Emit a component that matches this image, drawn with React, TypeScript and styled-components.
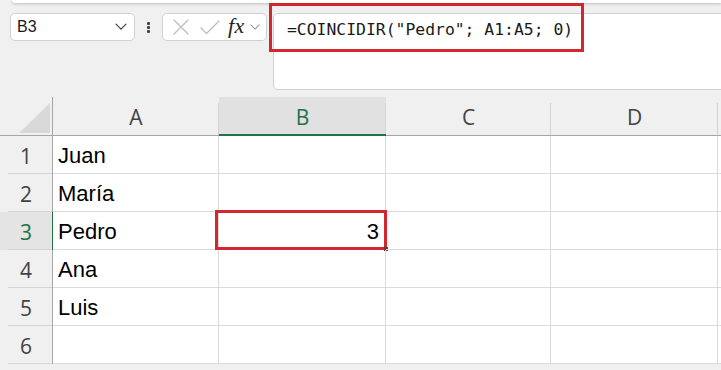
import React from 'react';
import styled, { createGlobalStyle, css } from 'styled-components';

const GlobalStyle = createGlobalStyle`
  html, body {
    margin: 0;
    padding: 0;
    background: #f0f0f0;
    overflow: hidden;
  }
`;

const GREEN = '#217346';
const RED = '#d4262f';
const GRID_LINE = '#dadada';

const COLUMNS = [
  { name: 'A', width: 166 },
  { name: 'B', width: 167 },
  { name: 'C', width: 165 },
  { name: 'D', width: 167 },
];

const ROWS: { a?: string; b?: string }[] = [
  { a: 'Juan' },
  { a: 'María' },
  { a: 'Pedro', b: '3' },
  { a: 'Ana' },
  { a: 'Luis' },
  {},
];

const SELECTED_COL = 'B';
const SELECTED_ROW = 3;

const Chevron: React.FC<{ size?: number; color?: string }> = ({ size = 12, color = '#424242' }) => (
  <svg width={size} height={size * 0.6} viewBox="0 0 12 7" fill="none">
    <path d="M1 1l5 5 5-5" stroke={color} strokeWidth="1.3" strokeLinecap="round" strokeLinejoin="round" />
  </svg>
);

const CancelIcon = () => (
  <svg width="16" height="16" viewBox="0 0 16 16" fill="none">
    <path d="M1 1l14 14M15 1L1 15" stroke="#bdbdbd" strokeWidth="1.3" strokeLinecap="round" />
  </svg>
);

const CheckIcon = () => (
  <svg width="20" height="15" viewBox="0 0 20 15" fill="none">
    <path d="M1 8l5.5 5.5L19 1" stroke="#bdbdbd" strokeWidth="1.3" strokeLinecap="round" strokeLinejoin="round" />
  </svg>
);

export default function App() {
  return (
    <>
      <GlobalStyle />
      <Page>
        <RibbonEdge />
        <FormulaRow>
          <NameBox>
            <NameText>B3</NameText>
            <Chevron size={12} />
          </NameBox>
          <Dots>
            <Dot />
            <Dot />
            <Dot />
          </Dots>
          <ButtonGroup>
            <IconSlot>
              <CancelIcon />
            </IconSlot>
            <IconSlot>
              <CheckIcon />
            </IconSlot>
            <Fx>fx</Fx>
            <Chevron size={10} color="#9e9e9e" />
          </ButtonGroup>
          <FormulaBox>
            <FormulaText>=COINCIDIR("Pedro"; A1:A5; 0)</FormulaText>
          </FormulaBox>
        </FormulaRow>
        <FormulaHighlight />

        <Sheet>
          <Corner />
          {COLUMNS.map((c) => (
            <ColHeader key={c.name} $selected={c.name === SELECTED_COL}>
              {c.name}
            </ColHeader>
          ))}
          <ColHeader $selected={false} />

          {ROWS.map((r, i) => {
            const n = i + 1;
            return (
              <React.Fragment key={n}>
                <RowHeader $selected={n === SELECTED_ROW}>{n}</RowHeader>
                <Cell>{r.a}</Cell>
                <Cell $number>
                  {r.b}
                  {n === SELECTED_ROW && (
                    <CellHighlight>
                      <FillHandle />
                    </CellHighlight>
                  )}
                </Cell>
                <Cell />
                <Cell />
                <Cell />
              </React.Fragment>
            );
          })}
        </Sheet>
      </Page>
    </>
  );
}

const Page = styled.div`
  position: relative;
  width: 721px;
  height: 370px;
  overflow: hidden;
  background: #f0f0f0;
`;

const RibbonEdge = styled.div`
  margin-left: 12px;
  height: 3px;
  background: #ffffff;
  border-bottom-left-radius: 6px;
  box-shadow: 0 1px 3px rgba(0, 0, 0, 0.22);
`;

const FormulaRow = styled.div`
  display: flex;
  align-items: flex-start;
  padding: 10px 0 0 10px;
`;

const boxBase = css`
  box-sizing: border-box;
  background: #ffffff;
  border: 1px solid #d1d1d1;
  border-radius: 5px;
`;

const NameBox = styled.div`
  ${boxBase};
  width: 125px;
  height: 28px;
  display: flex;
  align-items: center;
  justify-content: space-between;
  padding: 0 7px 0 6px;
`;

const NameText = styled.span`
  font-family: 'Liberation Sans', Arial, sans-serif;
  font-size: 16px;
  color: #1a1a1a;
`;

const Dots = styled.div`
  width: 27px;
  height: 28px;
  display: flex;
  flex-direction: column;
  align-items: center;
  justify-content: center;
  gap: 1px;
`;

const Dot = styled.span`
  width: 3px;
  height: 3px;
  border-radius: 1px;
  background: #424242;
`;

const ButtonGroup = styled.div`
  ${boxBase};
  width: 105px;
  height: 28px;
  display: flex;
  align-items: center;
  padding: 0 4px 0 6px;
`;

const IconSlot = styled.span`
  display: flex;
  align-items: center;
  justify-content: center;
  width: 24px;
  margin-right: 5px;
`;

const Fx = styled.span`
  font-family: 'Liberation Serif', 'Times New Roman', serif;
  font-style: italic;
  font-size: 22px;
  color: #242424;
  margin: -3px 5px 0 1px;
  letter-spacing: 0.5px;
`;

const FormulaBox = styled.div`
  ${boxBase};
  flex: 1;
  height: 77px;
  margin-left: 6px;
  margin-right: -10px;
  padding: 5px 0 0 13px;
`;

const FormulaText = styled.span`
  font-family: 'DejaVu Sans Mono', 'Liberation Mono', monospace;
  font-size: 16.4px;
  line-height: 22px;
  color: #1a1a1a;
`;

const FormulaHighlight = styled.div`
  position: absolute;
  left: 269px;
  top: 3px;
  width: 315px;
  height: 49px;
  box-sizing: border-box;
  border: 3px solid ${RED};
  pointer-events: none;
`;

const Sheet = styled.div`
  display: grid;
  grid-template-columns: 53px ${COLUMNS.map((c) => `${c.width}px`).join(' ')} 1fr;
  grid-auto-rows: 38px;
  grid-template-rows: 39px;
  margin-top: 7px;
  background: #ffffff;
`;

const headerFont = css`
  font-family: 'Open Sans', 'Noto Sans', sans-serif;
  font-size: 21px;
`;

const Corner = styled.div`
  position: relative;
  background: #f0f0f0;
  border-bottom: 1px solid #a6a6a6;
  border-right: 1px solid #a6a6a6;

  &::after {
    content: '';
    position: absolute;
    right: 2px;
    bottom: 2px;
    width: 31px;
    height: 30px;
    background: #d9d9d9;
    clip-path: polygon(100% 0, 100% 100%, 0 100%);
  }
`;

const ColHeader = styled.div<{ $selected: boolean }>`
  ${headerFont};
  position: relative;
  box-sizing: border-box;
  display: flex;
  align-items: center;
  justify-content: center;
  padding-top: 2px;
  background: ${({ $selected }) => ($selected ? '#e1e1e1' : '#f0f0f0')};
  color: ${({ $selected }) => ($selected ? GREEN : '#424242')};
  border-bottom: ${({ $selected }) => ($selected ? `2px solid ${GREEN}` : '1px solid #a6a6a6')};

  &::after {
    content: '';
    position: absolute;
    right: 0;
    top: 6px;
    bottom: 0;
    width: 1px;
    background: #d4d4d4;
  }
`;

const RowHeader = styled.div<{ $selected: boolean }>`
  ${headerFont};
  position: relative;
  box-sizing: border-box;
  display: flex;
  align-items: center;
  justify-content: center;
  padding-top: 2px;
  background: ${({ $selected }) => ($selected ? '#e4e4e4' : '#f0f0f0')};
  color: ${({ $selected }) => ($selected ? GREEN : '#424242')};
  border-right: 1px solid ${({ $selected }) => ($selected ? GREEN : '#a6a6a6')};

  &::after {
    content: '';
    position: absolute;
    left: 8px;
    right: 0;
    bottom: 0;
    height: 1px;
    background: #d4d4d4;
  }
`;

const Cell = styled.div<{ $number?: boolean }>`
  position: relative;
  box-sizing: border-box;
  display: flex;
  align-items: center;
  justify-content: ${({ $number }) => ($number ? 'flex-end' : 'flex-start')};
  padding: 3px 6px 0 5px;
  font-family: 'Liberation Sans', Arial, sans-serif;
  font-size: 22px;
  color: #000000;
  border-right: 1px solid ${GRID_LINE};
  border-bottom: 1px solid ${GRID_LINE};
`;

const CellHighlight = styled.div`
  position: absolute;
  left: -4px;
  right: -2px;
  top: -2px;
  bottom: -1px;
  border: 3px solid ${RED};
  pointer-events: none;
`;

const FillHandle = styled.span`
  position: absolute;
  right: -4px;
  bottom: -4px;
  width: 4px;
  height: 4px;
  background: #6b3b2b;
`;
